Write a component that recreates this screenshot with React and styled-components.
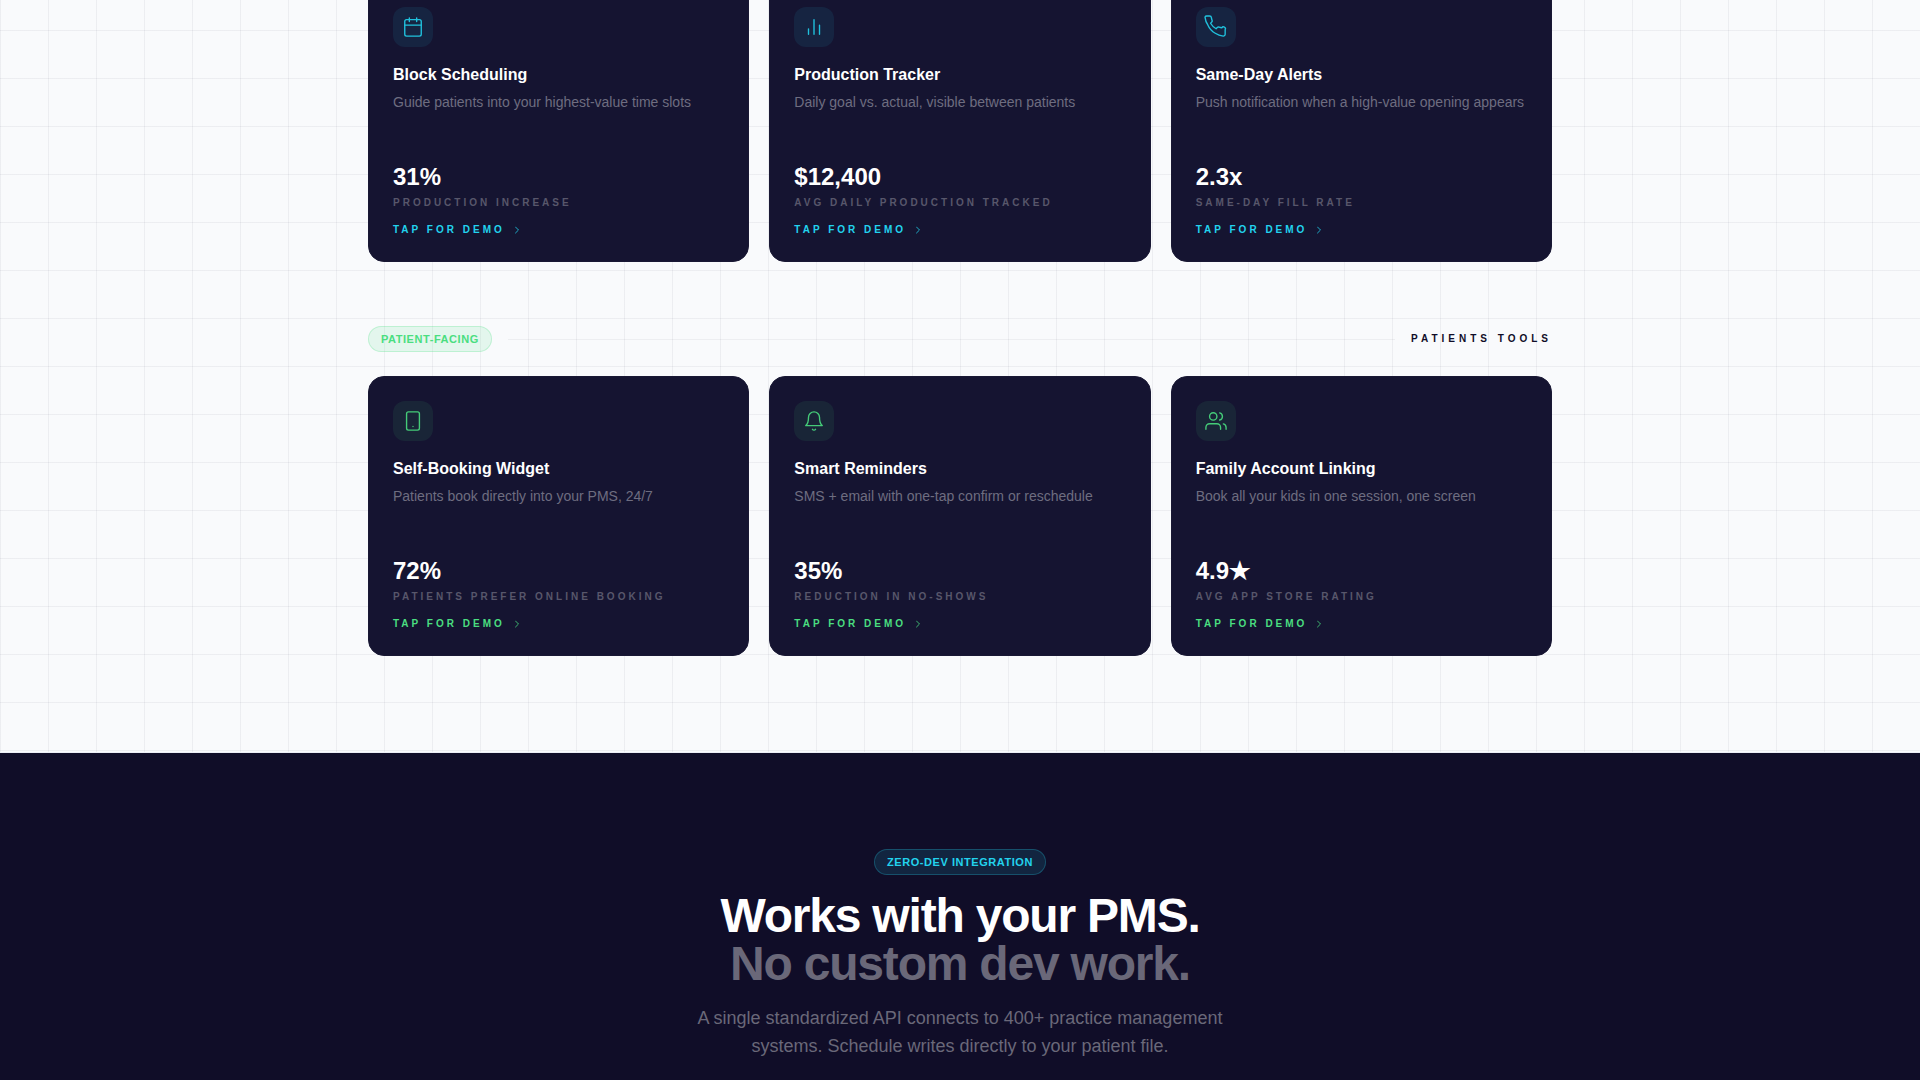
import React from 'react'
import styled, { createGlobalStyle } from 'styled-components'
import { ChevronRight } from 'lucide-react'

const GlobalStyle = createGlobalStyle`
    * {
        box-sizing: border-box;
        margin: 0;
        padding: 0;
    }
    body {
        background: #100d28;
        font-family: "Liberation Sans", Arial, sans-serif;
    }
`;

const cyan = "#22d3ee"
const green = "#4ade80"

const icons = {
    calendar: (
        <>
            <rect x="3" y="4" width="18" height="18" rx="2" />
            <path d="M16 2v4M8 2v4M3 10h18" />
        </>
    ),
    bars: <path d="M18 20V10M12 20V4M6 20v-6" />,
    phone: <path d="M22 16.92v3a2 2 0 01-2.18 2 19.79 19.79 0 01-8.63-3.07A19.5 19.5 0 013.07 9.8 19.79 19.79 0 01.01 1.18 2 2 0 012 .01h3a2 2 0 012 1.72c.127.96.361 1.903.7 2.81a2 2 0 01-.45 2.11L6.09 7.91a16 16 0 006 6l1.27-1.27a2 2 0 012.11-.45c.907.339 1.85.573 2.81.7A2 2 0 0122 14.92z" />,
    mobile: (
        <>
            <rect x="5" y="2" width="14" height="20" rx="2" />
            <path d="M12 18h.01" />
        </>
    ),
    bell: <path d="M18 8A6 6 0 006 8c0 7-3 9-3 9h18s-3-2-3-9M13.73 21a2 2 0 01-3.46 0" />,
    users: (
        <>
            <path d="M17 21v-2a4 4 0 00-4-4H5a4 4 0 00-4 4v2" />
            <circle cx="9" cy="7" r="4" />
            <path d="M23 21v-2a4 4 0 00-3-3.87M16 3.13a4 4 0 010 7.75" />
        </>
    ),
}

const officeTools = [
    { icon: "calendar", title: "Block Scheduling", text: "Guide patients into your highest-value time slots", stat: "31%", label: "Production increase" },
    { icon: "bars", title: "Production Tracker", text: "Daily goal vs. actual, visible between patients", stat: "$12,400", label: "Avg daily production tracked" },
    { icon: "phone", title: "Same-Day Alerts", text: "Push notification when a high-value opening appears", stat: "2.3x", label: "Same-day fill rate" },
]

const patientTools = [
    { icon: "mobile", title: "Self-Booking Widget", text: "Patients book directly into your PMS, 24/7", stat: "72%", label: "Patients prefer online booking" },
    { icon: "bell", title: "Smart Reminders", text: "SMS + email with one-tap confirm or reschedule", stat: "35%", label: "Reduction in no-shows" },
    { icon: "users", title: "Family Account Linking", text: "Book all your kids in one session, one screen", stat: "4.9★", label: "Avg app store rating" },
]

function ToolCard({ tool, color }) {
    return (
        <Card>
            <IconBox $color={color}>
                <Icon viewBox="0 0 24 24">{icons[tool.icon]}</Icon>
            </IconBox>
            <h3>{tool.title}</h3>
            <p>{tool.text}</p>
            <Stat>{tool.stat}</Stat>
            <StatLabel>{tool.label}</StatLabel>
            <DemoButton $color={color}>
                Tap for demo
                <ChevronRight size={12} strokeWidth={2} />
            </DemoButton>
        </Card>
    )
}

export default function App() {
    return (
        <>
            <GlobalStyle />
            <Page>
                <Tools>
                    <Container>
                        <CardGrid $scrolled>
                            {officeTools.map((tool) => <ToolCard key={tool.title} tool={tool} color={cyan} />)}
                        </CardGrid>
                        <GroupHeader>
                            <Pill $color={green}>Patient-Facing</Pill>
                            <Divider />
                            <h2>Patients Tools</h2>
                        </GroupHeader>
                        <CardGrid>
                            {patientTools.map((tool) => <ToolCard key={tool.title} tool={tool} color={green} />)}
                        </CardGrid>
                    </Container>
                </Tools>
                <Integration>
                    <Pill $color={cyan}>Zero-Dev Integration</Pill>
                    <h2>Works with your PMS.<span>No custom dev work.</span></h2>
                    <p>A single standardized API connects to 400+ practice management systems. Schedule writes directly to your patient file.</p>
                </Integration>
            </Page>
        </>
    )
}

const Page = styled.main`
    display: flex;
    flex-direction: column;
    min-height: 100vh;
    overflow: hidden;
`;

const Tools = styled.section`
    padding: 0 48px 96px;
    border-bottom: 1px solid #eceef6;
    background-color: #f9fafc;
    background-image:
        linear-gradient(rgba(15, 13, 40, 0.05) 1px, transparent 1px),
        linear-gradient(90deg, rgba(15, 13, 40, 0.05) 1px, transparent 1px);
    background-size: 48px 48px;
    background-position: 0 30px;
`;

const Container = styled.div`
    max-width: 1184px;
    margin: 0 auto;
`;

const CardGrid = styled.div`
    display: grid;
    grid-template-columns: repeat(3, 1fr);
    gap: 20px;
    margin-top: ${({ $scrolled }) => $scrolled ? "-18px" : "0"};
`;

const Card = styled.article`
    display: flex;
    flex-direction: column;
    align-items: flex-start;
    min-height: 280px;
    padding: 24px;
    border: 1px solid #191834;
    border-radius: 16px;
    background: #151431;
    h3 {
        margin: 16px 0 4px;
        color: #fff;
        font-size: 16px;
        line-height: 24px;
    }
    p {
        color: #6e6d80;
        font-size: 14px;
        line-height: 22px;
    }
`;

const IconBox = styled.div`
    display: flex;
    align-items: center;
    justify-content: center;
    width: 40px;
    height: 40px;
    border-radius: 12px;
    color: ${({ $color }) => $color};
    background: ${({ $color }) => $color + "16"};
`;

const Icon = styled.svg`
    width: 22px;
    height: 22px;
    overflow: visible;
    fill: none;
    stroke: currentColor;
    stroke-width: 1.5;
    stroke-linecap: round;
    stroke-linejoin: round;
    opacity: 0.9;
`;

const Stat = styled.strong`
    margin-top: auto;
    color: #fff;
    font-size: 24px;
    line-height: 32px;
`;

const StatLabel = styled.span`
    margin: 2px 0 12px;
    color: #58576b;
    font-size: 10px;
    font-weight: bold;
    line-height: 15px;
    letter-spacing: 3px;
    text-transform: uppercase;
`;

const DemoButton = styled.button`
    display: flex;
    align-items: center;
    gap: 6px;
    border: none;
    background: none;
    color: ${({ $color }) => $color};
    font-family: inherit;
    font-size: 10px;
    font-weight: bold;
    line-height: 15px;
    letter-spacing: 3px;
    text-transform: uppercase;
    cursor: pointer;
    svg {
        opacity: 0.8;
    }
`;

const GroupHeader = styled.div`
    display: flex;
    align-items: center;
    gap: 16px;
    margin: 64px 0 24px;
    h2 {
        color: #100d28;
        font-size: 10px;
        line-height: 16px;
        letter-spacing: 4px;
        text-transform: uppercase;
    }
`;

const Divider = styled.div`
    flex: 1;
    height: 1px;
    background: rgba(15, 13, 40, 0.05);
`;

const Pill = styled.span`
    padding: 4px 12px;
    border: 1px solid ${({ $color }) => $color + "40"};
    border-radius: 16px;
    background: ${({ $color }) => $color + "1f"};
    color: ${({ $color }) => $color};
    font-size: 11px;
    font-weight: bold;
    line-height: 16px;
    letter-spacing: 0.05em;
    text-transform: uppercase;
`;

const Integration = styled.section`
    display: flex;
    flex: 1;
    flex-direction: column;
    align-items: center;
    padding: 96px 24px 20px;
    background: #100d28;
    text-align: center;
    h2 {
        margin: 17px 0 16px;
        color: #fff;
        font-size: 48px;
        line-height: 48px;
        letter-spacing: -0.025em;
    }
    h2 span {
        display: block;
        color: #6a6879;
    }
    p {
        max-width: 576px;
        color: #6a6879;
        font-size: 18px;
        line-height: 28px;
    }
`;
